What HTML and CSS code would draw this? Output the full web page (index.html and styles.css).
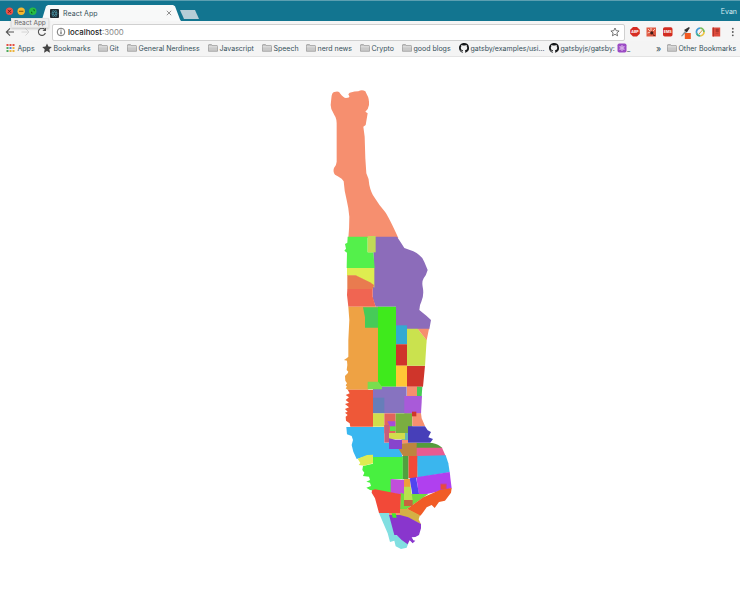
FILE: index.html
```html
<!DOCTYPE html>
<html lang="en">
<head>
<meta charset="utf-8">
<title>React App</title>
<link rel="stylesheet" href="styles.css">
</head>
<body>
<svg width="0" height="0" class="symbols">
  <symbol id="folder" viewBox="0 0 10 8"><path d="M.5 7.3V1.2Q.5.6 1 .6H3.5L4.3 1.6H9Q9.5 1.6 9.5 2.2V7.3Z" fill="#c9c9c9" stroke="#8e8e8e" stroke-width=".65"/><path d="M.7 2.8H9.3" stroke="#eee" stroke-width=".7"/></symbol>
  <symbol id="github" viewBox="0 0 16 16"><path fill="#17191b" d="M8 0C3.58 0 0 3.58 0 8c0 3.54 2.29 6.53 5.47 7.59.4.07.55-.17.55-.38v-1.49c-2.23.48-2.7-.94-2.7-.94-.36-.93-.89-1.17-.89-1.17-.73-.5.06-.49.06-.49.8.06 1.22.83 1.22.83.72 1.22 1.87.87 2.33.66.07-.52.28-.87.51-1.07-1.78-.2-3.64-.89-3.64-3.95 0-.87.31-1.59.82-2.15-.08-.2-.36-1.02.08-2.12 0 0 .67-.21 2.2.82a7.4 7.4 0 0 1 4 0c1.53-1.04 2.2-.82 2.2-.82.44 1.1.16 1.92.08 2.12.51.56.82 1.27.82 2.15 0 3.07-1.87 3.75-3.65 3.95.29.25.54.73.54 1.48v2.2c0 .21.15.46.55.38A8 8 0 0 0 8 0Z"/></symbol>
</svg>

<header class="tabstrip">
  <svg class="lights" viewBox="0 0 40 20">
    <circle cx="9.5" cy="11.3" r="3.7" fill="#ed5248"/><path d="M8 9.8l3 3m0-3l-3 3" stroke="#6c1713" stroke-width="1"/>
    <circle cx="21.2" cy="11.3" r="3.7" fill="#f6b72e"/><path d="M19 11.3h4.4" stroke="#83520b" stroke-width="1.1"/>
    <circle cx="32.8" cy="11.3" r="3.7" fill="#28bd45"/><path d="M31 11.2v2h2zM32.7 9.4h2v2z" fill="#085d18"/>
  </svg>
  <div class="tab">
    <svg class="favicon" viewBox="0 0 10 10"><rect width="10" height="10" rx="1" fill="#202a30"/><g fill="none" stroke="#4b9caf" stroke-width=".6"><ellipse cx="5" cy="5" rx="3.8" ry="1.5"/><ellipse cx="5" cy="5" rx="3.8" ry="1.5" transform="rotate(60 5 5)"/><ellipse cx="5" cy="5" rx="3.8" ry="1.5" transform="rotate(120 5 5)"/></g></svg>
    <span class="tab-title">React App</span>
    <svg class="close" viewBox="0 0 6 6"><path d="M.8.8l4.4 4.4m0-4.4L.8 5.2" stroke="#777" stroke-width=".8"/></svg>
  </div>
  <div class="newtab"></div>
  <span class="profile">Evan</span>
</header>
<div class="tooltip">React App</div>

<nav class="toolbar">
  <svg class="nav" viewBox="0 0 50 16">
    <path d="M14 8H6.3M10 4.3L6.3 8L10 11.7" fill="none" stroke="#555" stroke-width="1.1"/>
    <path d="M21.5 8H29M25.5 4.5L29 8L25.5 11.5" fill="none" stroke="#d4d4d4" stroke-width="1"/>
    <path d="M45.4 9A3.6 3.6 0 1 1 44.6 5.3" fill="none" stroke="#555" stroke-width="1.1"/><path d="M46 3.5V7H42.5Z" fill="#555"/>
  </svg>
  <div class="address">
    <svg class="info" viewBox="0 0 10 10"><circle cx="5" cy="5" r="3.8" fill="none" stroke="#555" stroke-width=".8"/><path d="M5 4.4V7.3M5 2.6V3.6" stroke="#444" stroke-width="1"/></svg>
    <span class="url">localhost<span class="port">:3000</span></span>
    <svg class="star" viewBox="0 0 10 10"><path d="M5 1l1.2 2.7 2.9.3-2.2 1.9.7 2.9L5 7.3 2.4 8.8l.7-2.9L.9 4l2.9-.3Z" fill="none" stroke="#555" stroke-width=".8"/></svg>
  </div>
  <svg class="extensions" viewBox="0 0 114 16">
    <path d="M7 3h4l2.8 2.8v4L11 12.6H7L4.2 9.8v-4Z" fill="#d62c22"/><text x="9" y="9.4" class="badge">ABP</text>
    <rect x="20.5" y="3.5" width="9.5" height="9" fill="#e05a43"/><path d="M22 5l2 2m1-3v3m4-2l-2 2M21.5 9l3-1" stroke="#f7cebd" stroke-width="1"/><circle cx="25.8" cy="8.9" r="1.6" fill="#421c17"/><path d="M27 10l2.5 2h-2z" fill="#611f18"/>
    <rect x="37" y="3.3" width="9.5" height="9.3" rx="1.8" fill="#d22c21"/><text x="41.8" y="9.3" class="badge">EMS</text>
    <path d="M55 12l4-5 1.5 1.2L56 12.5Z" fill="#8f9a9c"/><path d="M58 6l5-3 .8 1-3 4.5Z" fill="#333"/><rect x="58.8" y="9" width="6" height="6" fill="#f15b22"/>
    <g fill="none" stroke-width="1.8"><path d="M70.6 9.2A3.8 3.8 0 0 1 74.2 4.2" stroke="#4199d4"/><path d="M74.2 4.2A3.8 3.8 0 0 1 78 8" stroke="#77bd59"/><path d="M78 8A3.8 3.8 0 0 1 74.2 11.8" stroke="#edc342"/><path d="M74.2 11.8A3.8 3.8 0 0 1 70.6 9.2" stroke="#3aa995"/></g><path d="M73 10l3.5-4" stroke="#d6993e"/>
    <rect x="86.2" y="3.5" width="8" height="9" fill="#df4b3c"/><path d="M87.5 3.5v9" stroke="#a62e26" stroke-width=".8"/><path d="M90 5h2.5v3H90zM89.5 9.5h3" fill="#ae392f" stroke="#ae392f" stroke-width=".5"/>
    <g fill="#555"><circle cx="106.8" cy="4.7" r=".9"/><circle cx="106.8" cy="8" r=".9"/><circle cx="106.8" cy="11.3" r=".9"/></g>
  </svg>
</nav>

<nav class="bookmarks">
  <a><svg viewBox="0 0 8 8"><g fill="#e34e42"><path d="M0 0h2v2H0zM3 0h2v2H3zM6 0h2v2H6z"/></g><path d="M0 3h2v2H0z" fill="#4ca95a"/><path d="M3 3h2v2H3z" fill="#4b83d9"/><path d="M6 3h2v2H6zM3 6h2v2H3zM6 6h2v2H6z" fill="#ecb33b"/><path d="M0 6h2v2H0z" fill="#4ca95a"/></svg>Apps</a>
  <a><svg viewBox="0 0 10 10"><path d="M5 .5l1.4 3.1 3.4.4-2.5 2.3.7 3.4L5 8 2 9.7l.7-3.4L.2 4l3.4-.4Z" fill="#444"/></svg>Bookmarks</a>
  <a><svg><use href="#folder"/></svg>Git</a>
  <a><svg><use href="#folder"/></svg>General Nerdiness</a>
  <a><svg><use href="#folder"/></svg>Javascript</a>
  <a><svg><use href="#folder"/></svg>Speech</a>
  <a><svg><use href="#folder"/></svg>nerd news</a>
  <a><svg><use href="#folder"/></svg>Crypto</a>
  <a><svg><use href="#folder"/></svg>good blogs</a>
  <a><svg><use href="#github"/></svg>gatsby/examples/usi...</a>
  <a><svg><use href="#github"/></svg>gatsbyjs/gatsby: <svg class="emoji" viewBox="0 0 10 10"><rect x=".5" y=".5" width="9" height="9" rx="1.8" fill="#9b4bc4"/><path d="M5 2v6M2.4 3.5l5.2 3M7.6 3.5l-5.2 3" stroke="#e2c2ef" stroke-width=".8"/><circle cx="5" cy="5" r="2" fill="none" stroke="#e2c2ef" stroke-width=".5"/></svg>_</a>
  <span class="more">»</span>
  <a><svg><use href="#folder"/></svg>Other Bookmarks</a>
</nav>

<main>
<svg class="map" viewBox="0 57 740 552">
  <!-- Upper Manhattan -->
  <g transform="translate(320 80) scale(.33333)">
    <path fill="#f68f6f" d="M32 75L34 55Q35 37 43 36Q57 31 61 41Q70 53 78 54Q89 54 88 49L85 43L89 38Q105 34 115 34Q126 28 136 34L141 44Q148 55 147 75Q145 88 136 95L143 100L137 135L130 140L134 170L136 235L139 280Q147 295 148 315Q153 338 163 352Q178 377 195 395Q208 414 235 474H85Q88 445 88 410Q85 380 80 360Q73 335 71 304L65 296Q54 288 45 284Q38 275 42 264Q49 258 50 245V140Q51 115 43 105L34 87Z"/>
  </g>
  <!-- Harlem -->
  <g transform="translate(335 230) scale(.33333)">
    <path fill="#8c6cba" d="M120 20H186L198 38L208 54L235 64Q260 75 268 96L278 120Q274 135 266 145Q260 155 263 170Q268 195 259 215Q253 225 253 240L275 258L288 270L283 298H183V230H122L113 205V178L117 160V113L115 67Z"/>
    <path fill="#54f04b" d="M38 20H98V67H115L119 114H35L36 68L28 62L33 56L30 42L37 38Z"/>
    <path fill="#c1da57" d="M98 18H122V67H98Z"/>
    <path fill="#deed50" d="M36 114H118V173L105 159L62 137H36Z"/>
    <path fill="#e97b4f" d="M37 136H62L105 157L117 165L113 178H37Z"/>
    <path fill="#f06552" d="M37 177H113V200L122 230H40L36 195Z"/>
  </g>
  <!-- Central Park and both sides -->
  <g transform="translate(335 320) scale(.33333)">
    <path fill="#eea244" d="M40 -40H130V185L98 209H38L32 205L36 200L32 196L36 190L31 182L30 168L38 160L40 155L35 150L37 135L36 122L27 120L36 114L40 110V60L43 0Z"/>
    <path fill="#46cb58" d="M84 -38H130V23H90V-8Z"/>
    <path fill="#3fea1c" d="M129 -40H183V200H129Z"/>
    <path fill="#32aad1" d="M183 16H216V73H183Z"/>
    <path fill="#cf352b" d="M183 73H216V137H183ZM216 137H270L264 200H216Z"/>
    <path fill="#ffc836" d="M183 137H216V200H183Z"/>
    <path fill="#cae24e" d="M216 26H248L275 60L270 137H216Z"/>
    <path fill="#f68f6f" d="M248 26H282L275 61ZM216 200H246V229H216Z"/>
    <path fill="#45cb54" d="M246 200H262L260 228H246Z"/>
  </g>
  <!-- Midtown -->
  <g transform="translate(335 380) scale(.33333)">
    <path fill="#39b7f0" d="M34 141H148V188H195L202 232H114L95 228L65 237L55 215L50 195L54 180L50 168L36 163Z"/>
    <path fill="#ee5838" d="M38 29H114V140H46L44 130L33 122L32 110L38 105L30 98L38 95L30 87L42 82L30 72L42 68L32 60L42 52L32 45L44 40Z"/>
    <path fill="#8773c0" d="M114 20H215V100H114Z"/>
    <path fill="#667eb9" d="M114 53H148V100H114Z"/>
    <path fill="#79dd4e" d="M98 5H130L141 20V28H98Z"/>
    <path fill="#a95ad9" d="M208 48H261L258 101H208Z"/>
    <path fill="#d0de4c" d="M114 100H148V140H114Z"/>
    <path fill="#e2645b" d="M148 100H182V160H148Z"/>
    <path fill="#c65d7c" d="M148 135H162V188H148Z"/>
    <path fill="#7aae40" d="M182 100H232V159H182Z"/>
    <path fill="#a64bda" d="M157 124H181V140H165Z"/>
    <path fill="#5ce247" d="M165 139H182V153H165Z"/>
    <path fill="#f68f6f" d="M232 100H258L260 115L270 138H232ZM200 179H219V189H200Z"/>
    <path fill="#d0352c" d="M231 95H244V109H231Z"/>
    <path fill="#473fb9" d="M219 139H270L278 151L288 156L280 172L294 177L286 188H219Z"/>
    <path fill="#63b7b0" d="M200 159H219V180H200Z"/>
    <path fill="#d3dc4c" d="M162 159H210V178H162Z"/>
    <path fill="#8745cc" d="M162 175L181 179H201V207H162Z"/>
  </g>
  <!-- Chelsea to the Village -->
  <g transform="translate(345 440) scale(.33333)">
    <path fill="#be853f" d="M161 27H171V10L216 8V48H174Z"/>
    <path fill="#549c3c" d="M215 9H262Q280 12 292 24H215Z"/>
    <path fill="#e85b92" d="M215 23H291L302 48H215Z"/>
    <path fill="#3ab6ee" d="M216 48L302 46L310 70L314 97L217 113Z"/>
    <path fill="#f24a37" d="M190 48H217V114H190Z"/>
    <path fill="#50a13f" d="M172 48H190V118H172Z"/>
    <path fill="#48f040" d="M82 51L173 51V118H140V164L107 156L75 150L64 143L78 138L75 128L64 125L75 120L72 110L54 108L58 98L52 90L54 78L84 71Z"/>
    <path fill="#deeb51" d="M38 56L66 45L84 44V70L57 77L41 75L46 69Z"/>
    <path fill="#c14edb" d="M137 117L177 120V166L137 159Z"/>
    <path fill="#ee9d39" d="M177 118L195 116L197 142H177Z"/>
    <path fill="#b040ef" d="M214 112L314 96L320 145L300 150L222 167Z"/>
    <path fill="#5145ef" d="M194 115L213 112L223 167L203 171Z"/>
    <path fill="#d14480" d="M286 131H305V149H286Z"/>
    <path fill="#e84b3e" d="M288 134H302V147H288Z"/>
  </g>
  <!-- Downtown -->
  <g transform="translate(355 480) scale(.33333)">
    <path fill="#72da40" d="M137 38L148 42L220 42L155 88H135Z"/>
    <path fill="#bae04e" d="M147 20H167L173 61H147Z"/>
    <path fill="#f24938" d="M51 31L60 28L138 43L135 99H72L60 55L50 38Z"/>
    <path fill="#c8643e" d="M147 60H173V78H147Z"/>
    <path fill="#f15c26" d="M156 87L205 52L255 30L290 24L288 38L270 62L252 66L239 84L230 75L215 82L200 103L195 108Z"/>
    <path fill="#d4b045" d="M135 87H158L195 106L191 118L198 133L160 113L135 108Z"/>
    <path fill="#81dfe1" d="M72 99H102L120 162L160 190L155 203L138 207L122 199L118 182L105 186L98 160L85 130Z"/>
    <path fill="#8936cd" d="M102 105H135L160 112L198 132V145L192 165L181 171L170 172L175 181L181 182L173 190L164 181L158 193L140 180L125 165H118Z"/>
    <path fill="#f68f6f" d="M102 99H135V105H102Z"/>
    <path fill="#47e92b" d="M110 100H122L125 113H113Z"/>
  </g>
</svg>
</main>
</body>
</html>
```
FILE: styles.css
```css
* { box-sizing: border-box; }
body {
  margin: 0;
  width: 740px;
  height: 609px;
  overflow: hidden;
  background: #fff;
  font-family: Inter, "Liberation Sans", sans-serif;
  font-size: 7px;
  color: #35505a;
}
svg { display: block; flex: none; }
.symbols { position: absolute; }

.tabstrip {
  height: 21px;
  display: flex;
  align-items: flex-start;
  background: #127590;
  border-top: 1px solid #5c9fb1;
}
.lights { width: 40px; height: 20px; margin-top: -1px; }
.tab {
  width: 141px;
  height: 16px;
  margin-top: 4px;
  padding: 0 10px;
  display: flex;
  align-items: center;
  background: #f8f9f9;
  clip-path: polygon(0 100%, 2px 90%, 6px 8%, 8px 0, 133px 0, 135px 8%, 140px 90%, 100% 100%);
}
.favicon { width: 9px; height: 9px; }
.tab-title { margin-left: 4px; flex: 1; letter-spacing: .05px; }
.close { width: 6px; height: 6px; margin-right: -1px; }
.newtab {
  width: 19px;
  height: 9px;
  margin: 9px 0 0 -1px;
  background: #b6cdd7;
  clip-path: polygon(0 0, 15px 0, 100% 100%, 4px 100%);
}
.profile { margin: 6px 3px 0 auto; color: #d9edf2; }
.tooltip {
  position: absolute;
  left: 11px;
  top: 18px;
  width: 38px;
  height: 10px;
  line-height: 9px;
  text-align: center;
  font-size: 6.5px;
  color: #666;
  background: #eeeeee;
  border: 1px solid #e2e2e2;
  box-shadow: 0 1px 2px rgba(0, 0, 0, .2);
}

.toolbar {
  height: 20px;
  display: flex;
  align-items: center;
  background: #f5f5f5;
}
.nav { width: 50px; height: 16px; margin: 2px 2px 0 0; }
.address {
  width: 573px;
  height: 17px;
  margin-top: 2px;
  padding: 0 4px 0 3px;
  display: flex;
  align-items: center;
  background: #fff;
  border: 1px solid #d0d0d0;
  border-radius: 2px;
}
.info { width: 10px; height: 10px; }
.url { flex: 1; margin-left: 2px; font-size: 7.8px; font-weight: 500; color: #222; }
.port { font-weight: 400; color: #888; }
.star { width: 10px; height: 10px; }
.extensions { width: 114px; height: 16px; margin: 2px 0 0 1px; }
.badge { font-size: 3.6px; font-weight: 700; fill: #fff; text-anchor: middle; }

.bookmarks {
  height: 16px;
  padding: 0 0 1px 6px;
  display: grid;
  grid-template-columns: 36px 56px 29px 81px 54px 44px 54px 42px 57px 90px 107px 11px 73px;
  align-items: center;
  background: #f4f4f4;
  border-bottom: 1px solid #e3e3e3;
  white-space: nowrap;
}
.bookmarks a { display: flex; align-items: center; }
.bookmarks a > svg:first-child { width: 10px; height: 8px; margin-right: 1.5px; }
.bookmarks a:nth-child(1) > svg:first-child { width: 9px; margin-right: 2.5px; }
.bookmarks a:nth-child(2) > svg:first-child { height: 10px; }
.bookmarks a:nth-child(10) > svg:first-child,
.bookmarks a:nth-child(11) > svg:first-child { height: 10px; }
.bookmarks .emoji { width: 10px; height: 10px; margin-left: 2px; }
.more { font-size: 9px; line-height: 9px; }

.map { width: 740px; height: 552px; }
```
